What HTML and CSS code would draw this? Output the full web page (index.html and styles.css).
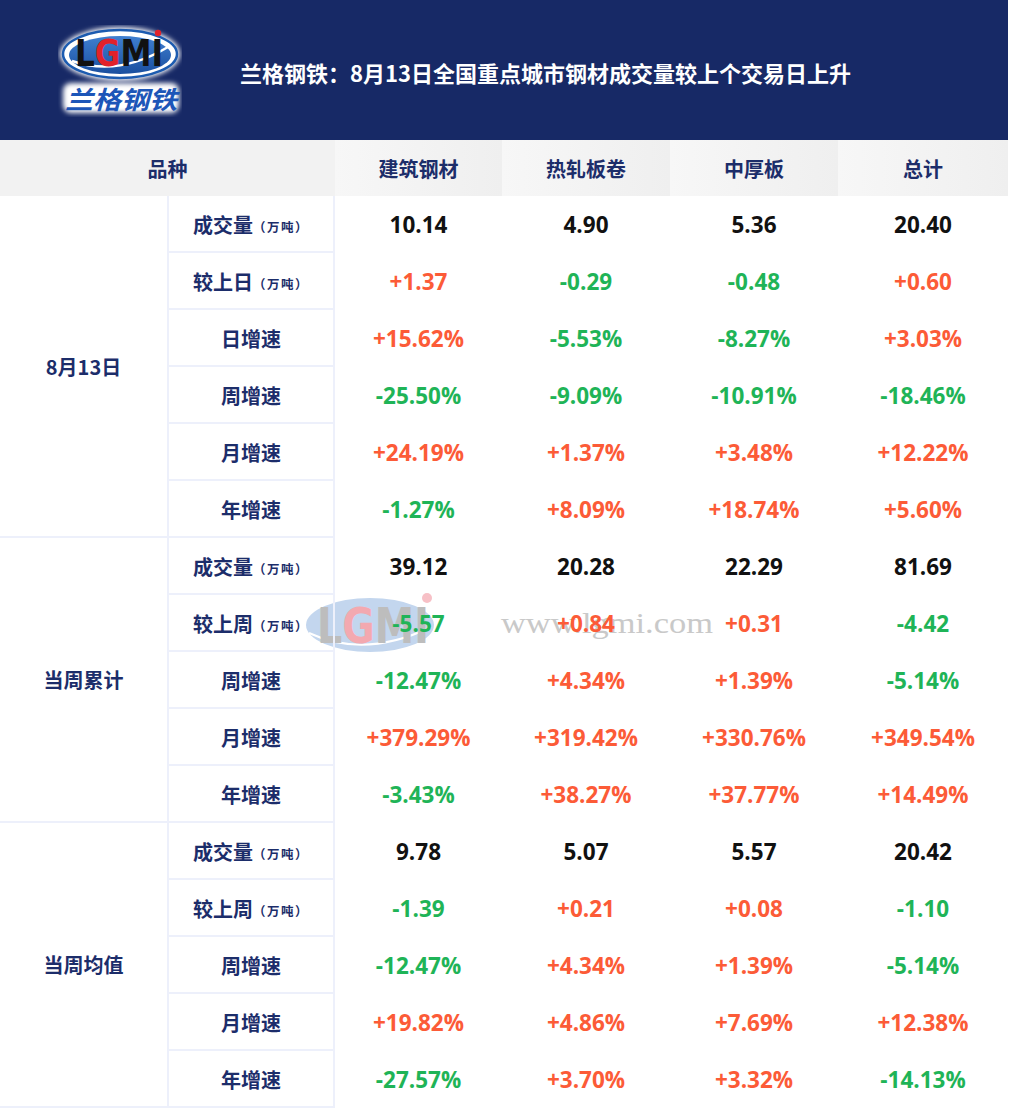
FILE: index.html
```html
<!DOCTYPE html>
<html lang="zh-CN">
<head>
<meta charset="utf-8">
<title>兰格钢铁</title>
<link rel="stylesheet" href="styles.css">
</head>
<body>
<div class="page">
  <header class="banner">
    <svg class="logo" width="124" height="92" viewBox="0 0 124 92">
      <defs>
        <filter id="glow" x="-20%" y="-20%" width="140%" height="140%">
          <feGaussianBlur stdDeviation="2.5"/>
        </filter>
        <linearGradient id="oval" x1="0" y1="0" x2="0" y2="1">
          <stop offset="0" stop-color="#3f7fd0"/>
          <stop offset="1" stop-color="#1a4f9f"/>
        </linearGradient>
      </defs>
      <ellipse cx="62" cy="29" rx="60" ry="27" fill="#ffffff" filter="url(#glow)"/>
      <rect x="5" y="58" width="116" height="30" rx="8" fill="#ffffff" filter="url(#glow)"/>
      <ellipse cx="62" cy="29" rx="57" ry="24" fill="#ffffff"/>
      <ellipse cx="62" cy="29" rx="57" ry="24" fill="none" stroke="#1c5bb0" stroke-width="2.5"/>
      <ellipse cx="62" cy="30" rx="51" ry="19" fill="url(#oval)"/>
      <path d="M14 36 Q60 52 110 22" fill="none" stroke="#ffffff" stroke-width="2.5"/>
      <text x="17" y="41" font-size="38" textLength="88" lengthAdjust="spacingAndGlyphs" class="logo-lat"><tspan fill="#111">L</tspan><tspan fill="#e2222a">G</tspan><tspan fill="#111">MI</tspan></text>
      <circle cx="100" cy="8" r="3.2" fill="#e2222a"/>
      <text x="7" y="84" font-size="25" textLength="112" lengthAdjust="spacingAndGlyphs" class="logo-cn">兰格钢铁</text>
    </svg>
    <h1 class="title">兰格钢铁：8月13日全国重点城市钢材成交量较上个交易日上升</h1>
  </header>

  <div class="sheet">
    <svg class="watermark" width="420" height="70" viewBox="0 0 420 70">
      <ellipse cx="65" cy="36" rx="64" ry="27" fill="#c3d6ee"/>
      <path d="M4 44 Q60 70 126 38" fill="none" stroke="#ffffff" stroke-width="2"/>
      <text x="12" y="54" font-size="50" textLength="112" lengthAdjust="spacingAndGlyphs" class="wm-lat"><tspan fill="#bdbdbd">L</tspan><tspan fill="#f3a9b0">G</tspan><tspan fill="#bdbdbd">MI</tspan></text>
      <circle cx="122" cy="9" r="5" fill="#f7c0c6"/>
      <text x="196" y="44" font-size="30" textLength="212" lengthAdjust="spacingAndGlyphs" class="wm-url">www.lgmi.com</text>
    </svg>

    <div class="grid">
      <div class="th th-wide">品种</div>
      <div class="th">建筑钢材</div>
      <div class="th">热轧板卷</div>
      <div class="th">中厚板</div>
      <div class="th">总计</div>

      <div class="group span6">8月13日</div>
      <div class="label">成交量<small>（万吨）</small></div>
      <div class="num">10.14</div><div class="num">4.90</div><div class="num">5.36</div><div class="num">20.40</div>
      <div class="label">较上日<small>（万吨）</small></div>
      <div class="num up">+1.37</div><div class="num down">-0.29</div><div class="num down">-0.48</div><div class="num up">+0.60</div>
      <div class="label">日增速</div>
      <div class="num up">+15.62%</div><div class="num down">-5.53%</div><div class="num down">-8.27%</div><div class="num up">+3.03%</div>
      <div class="label">周增速</div>
      <div class="num down">-25.50%</div><div class="num down">-9.09%</div><div class="num down">-10.91%</div><div class="num down">-18.46%</div>
      <div class="label">月增速</div>
      <div class="num up">+24.19%</div><div class="num up">+1.37%</div><div class="num up">+3.48%</div><div class="num up">+12.22%</div>
      <div class="label">年增速</div>
      <div class="num down">-1.27%</div><div class="num up">+8.09%</div><div class="num up">+18.74%</div><div class="num up">+5.60%</div>

      <div class="group span5">当周累计</div>
      <div class="label">成交量<small>（万吨）</small></div>
      <div class="num">39.12</div><div class="num">20.28</div><div class="num">22.29</div><div class="num">81.69</div>
      <div class="label">较上周<small>（万吨）</small></div>
      <div class="num down">-5.57</div><div class="num up">+0.84</div><div class="num up">+0.31</div><div class="num down">-4.42</div>
      <div class="label">周增速</div>
      <div class="num down">-12.47%</div><div class="num up">+4.34%</div><div class="num up">+1.39%</div><div class="num down">-5.14%</div>
      <div class="label">月增速</div>
      <div class="num up">+379.29%</div><div class="num up">+319.42%</div><div class="num up">+330.76%</div><div class="num up">+349.54%</div>
      <div class="label">年增速</div>
      <div class="num down">-3.43%</div><div class="num up">+38.27%</div><div class="num up">+37.77%</div><div class="num up">+14.49%</div>

      <div class="group span5">当周均值</div>
      <div class="label">成交量<small>（万吨）</small></div>
      <div class="num">9.78</div><div class="num">5.07</div><div class="num">5.57</div><div class="num">20.42</div>
      <div class="label">较上周<small>（万吨）</small></div>
      <div class="num down">-1.39</div><div class="num up">+0.21</div><div class="num up">+0.08</div><div class="num down">-1.10</div>
      <div class="label">周增速</div>
      <div class="num down">-12.47%</div><div class="num up">+4.34%</div><div class="num up">+1.39%</div><div class="num down">-5.14%</div>
      <div class="label">月增速</div>
      <div class="num up">+19.82%</div><div class="num up">+4.86%</div><div class="num up">+7.69%</div><div class="num up">+12.38%</div>
      <div class="label">年增速</div>
      <div class="num down">-27.57%</div><div class="num up">+3.70%</div><div class="num up">+3.32%</div><div class="num down">-14.13%</div>
    </div>
  </div>
</div>
</body>
</html>
```

FILE: styles.css
```css
* { box-sizing: border-box; }

html, body {
  margin: 0;
  padding: 0;
  background: #ffffff;
}

body {
  font-family: "Noto Sans CJK SC", "Noto Sans", sans-serif;
}

.page {
  width: 1008px;
}

.banner {
  height: 140px;
  background: #172966;
  display: flex;
  align-items: center;
  padding-left: 58px;
  gap: 58px;
}

.logo {
  display: block;
  flex: none;
  margin-top: 2px;
}

.logo-lat {
  font-family: "DejaVu Sans", sans-serif;
  font-weight: bold;
}

.logo-cn {
  font-family: "Noto Sans CJK SC", sans-serif;
  font-weight: 700;
  font-style: italic;
  fill: #1d56b8;
}

.title {
  margin: 0;
  color: #ffffff;
  font-size: 22px;
  font-weight: 700;
  letter-spacing: 0;
  line-height: 1;
  padding-top: 4px;
}

.sheet {
  position: relative;
}

.watermark {
  position: absolute;
  left: 305px;
  top: 449px;
  z-index: 0;
}

.wm-lat {
  font-family: "DejaVu Sans", sans-serif;
  font-weight: bold;
}

.wm-url {
  font-family: "Liberation Serif", serif;
  fill: #c9c9c9;
}

.grid {
  position: relative;
  z-index: 1;
  display: grid;
  grid-template-columns: 167px 168px 167px 168px 168px 170px;
  grid-template-rows: 56px repeat(16, 57px);
}

.th {
  display: flex;
  align-items: center;
  justify-content: center;
  background: linear-gradient(to right, #f7f7f7, #efefef);
  color: #1c2d6a;
  font-size: 20px;
  font-weight: 700;
}

.th-wide {
  grid-column: span 2;
  background: #f2f2f2;
}

.group {
  display: flex;
  align-items: center;
  justify-content: center;
  color: #1c2d6a;
  font-size: 20px;
  font-weight: 700;
  border-bottom: 2px solid #edf0fb;
}

.span6 { grid-row: span 6; }
.span5 { grid-row: span 5; }

.label {
  display: flex;
  align-items: center;
  justify-content: center;
  color: #1c2d6a;
  font-size: 20px;
  font-weight: 700;
  border-left: 2px solid #edf0fb;
  border-right: 2px solid #edf0fb;
  border-bottom: 2px solid #edf0fb;
  padding-top: 2px;
}

.label small {
  font-size: 12.5px;
  font-weight: 700;
  letter-spacing: 1.5px;
  margin-top: 3px;
}

.num {
  display: flex;
  align-items: center;
  justify-content: center;
  font-family: "Open Sans", "Noto Sans", sans-serif;
  font-size: 22.5px;
  font-weight: 700;
  color: #111111;
  padding-bottom: 1px;
}

.num.up { color: #fc5b37; }
.num.down { color: #1fb457; }
```
